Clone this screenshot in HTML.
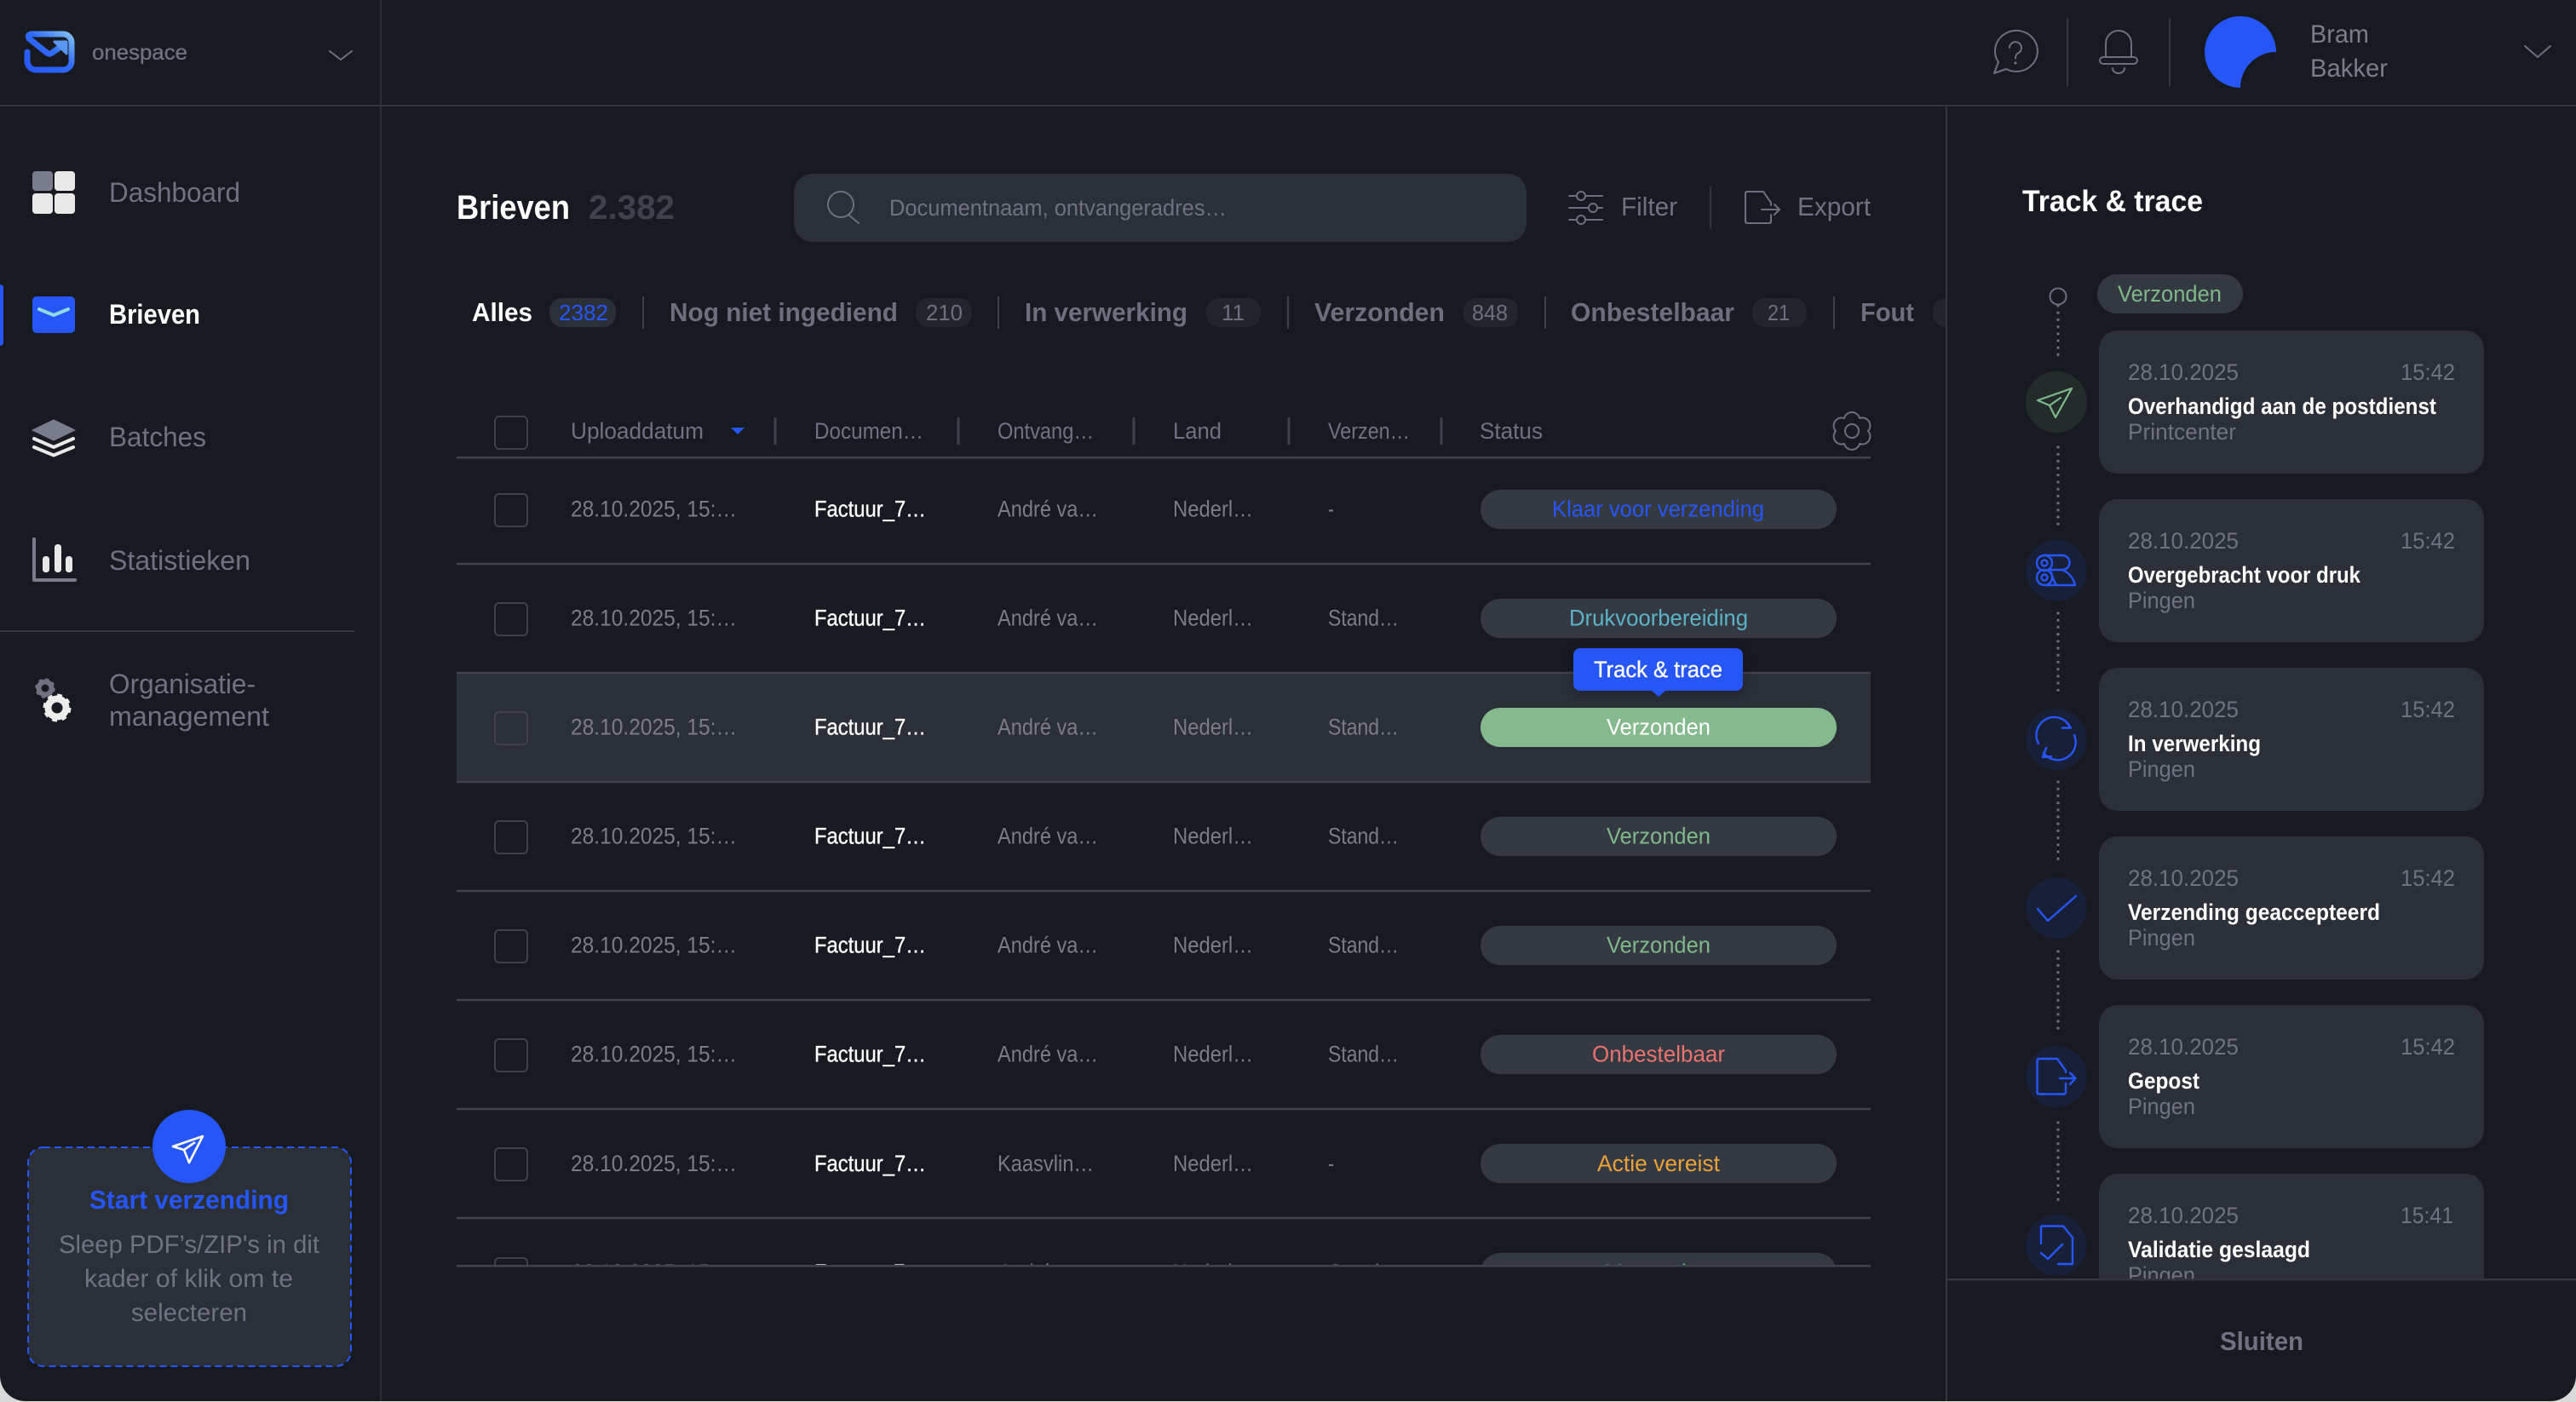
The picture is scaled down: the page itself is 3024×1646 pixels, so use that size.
<!DOCTYPE html>
<html lang="nl"><head><meta charset="utf-8"><title>Brieven</title>
<style>
html,body{margin:0;padding:0;background:#d9d9d9;width:3024px;height:1646px;overflow:hidden}
svg{display:block}
text{font-family:"Liberation Sans","Noto Sans CJK SC",sans-serif;font-size:27px;fill:#7a7d84}
.g{fill:#6f7281}.w{fill:#fff}.b{font-weight:700}
.nav{font-size:32px;fill:#6f7281}
.tab{font-size:31px;font-weight:700;fill:#6c6f7e}
.bd{font-size:26px;fill:#6c6f7e}
.m{fill:#fff;stroke:#fff;stroke-width:.35}
.dt{fill:#6f7281}
.ti{fill:#fff;font-weight:700}
.ln{stroke:#3f424d;stroke-width:2.5}
.sep{stroke:#3f424d;stroke-width:3}
.cb{fill:none;stroke:#3f424d;stroke-width:2}
.pill{fill:#353942}
.card{fill:#2b2f38}
.dots{stroke:#6c6f7e;stroke-width:3.2;stroke-linecap:round;stroke-dasharray:0 8.2;fill:none}
.ic{fill:none;stroke:#2656f8;stroke-width:2.4;stroke-linecap:round;stroke-linejoin:round}
.ig{fill:none;stroke:#6c6f7e;stroke-width:2;stroke-linecap:round;stroke-linejoin:round}
</style></head><body>
<svg xmlns="http://www.w3.org/2000/svg" width="3024" height="1646" viewBox="0 0 3024 1646">
<defs>
<linearGradient id="lg" x1="0" y1="1" x2="1" y2="0"><stop offset="0" stop-color="#2656f8"/><stop offset=".55" stop-color="#2f6af8"/><stop offset="1" stop-color="#7dbdf0"/></linearGradient>
<clipPath id="tb"><rect x="530" y="538" width="1680" height="948"/></clipPath>
<clipPath id="pn"><rect x="2286" y="125" width="738" height="1377"/></clipPath>
<clipPath id="av"><circle cx="2630" cy="61" r="42"/></clipPath>
<clipPath id="tabs"><rect x="530" y="340" width="1754" height="60"/></clipPath>
</defs>

<!-- base -->
<path d="M0 0H3024V1615a30 30 0 0 1-30 30H30a30 30 0 0 1-30-30Z" fill="#171a20"/>
<rect x="0" y="123" width="3024" height="2" fill="#33363e"/>
<rect x="446" y="0" width="2" height="1645" fill="#2c2f37"/>
<rect x="2284" y="125" width="2" height="1520" fill="#33363e"/>

<!-- logo -->
<path d="M32 61V72a10 10 0 0 0 10 10H74a10 10 0 0 0 10-10V50a10 10 0 0 0-10-10H37c-4 0-5 4-2 6L55 62c2 1.500 4 1.500 6 0L74 53" fill="none" stroke="url(#lg)" stroke-width="7" stroke-linecap="round" stroke-linejoin="round"/>
<path d="M64 49H78V63Z" fill="#5a97f4" stroke="#5a97f4" stroke-width="3" stroke-linejoin="round"/>
<text x="108" y="70" textLength="112" lengthAdjust="spacingAndGlyphs" style="font-size:25px;stroke:#6f7281;stroke-width:.35" class="g">onespace</text>
<path d="M387 60L400 70L413 60" class="ig"/>

<!-- nav icons -->
<rect x="38" y="201" width="24" height="23" rx="4" fill="#797c8c"/>
<rect x="64" y="201" width="24" height="23" rx="4" fill="#e8e8e8"/>
<rect x="38" y="227" width="24" height="24" rx="4" fill="#e8e8e8"/>
<rect x="64" y="227" width="24" height="24" rx="4" fill="#e8e8e8"/>
<text class="nav" x="128" y="237" textLength="154" lengthAdjust="spacingAndGlyphs">Dashboard</text>

<rect x="-4" y="334" width="8" height="72" rx="4" fill="#2656f8"/>
<rect x="38" y="348" width="50" height="43" rx="5" fill="#2656f8"/>
<path d="M46 363L63 370L80 363" fill="none" stroke="#8fdce0" stroke-width="4" stroke-linecap="round" stroke-linejoin="round"/>
<text class="nav b" x="128" y="380" style="fill:#fff" textLength="107" lengthAdjust="spacingAndGlyphs">Brieven</text>

<path d="M63 493L88 505L63 517L38 505Z" fill="#797c8c" stroke="#797c8c" stroke-width="1" stroke-linejoin="round"/>
<path d="M40 515L63 525L86 515M40 525L63 534.500L86 525" fill="none" stroke="#e8e8e8" stroke-width="4" stroke-linecap="round" stroke-linejoin="round"/>
<text class="nav" x="128" y="524" textLength="114" lengthAdjust="spacingAndGlyphs">Batches</text>

<path d="M40 633V681H88" fill="none" stroke="#797c8c" stroke-width="4" stroke-linecap="round" stroke-linejoin="round"/>
<rect x="50" y="653" width="8" height="19" rx="3.500" fill="#e8e8e8"/>
<rect x="64" y="639" width="8" height="33" rx="3.500" fill="#e8e8e8"/>
<rect x="77" y="653" width="8" height="19" rx="3.500" fill="#e8e8e8"/>
<text class="nav" x="128" y="669" textLength="166" lengthAdjust="spacingAndGlyphs">Statistieken</text>

<rect x="0" y="740" width="416" height="2" fill="#34373f"/>

<circle cx="53" cy="808" r="7.500" fill="none" stroke="#6e7180" stroke-width="6"/>
<circle cx="53" cy="808" r="10" fill="none" stroke="#6e7180" stroke-width="3.500" stroke-dasharray="3.900 3.950"/>
<circle cx="67" cy="831" r="10.500" fill="none" stroke="#ececec" stroke-width="8"/>
<circle cx="67" cy="831" r="14.500" fill="none" stroke="#ececec" stroke-width="4" stroke-dasharray="5.700 5.690"/>
<text class="nav" x="128" y="814" textLength="172" lengthAdjust="spacingAndGlyphs">Organisatie-</text>
<text class="nav" x="128" y="852" textLength="188" lengthAdjust="spacingAndGlyphs">management</text>

<!-- upload card -->
<rect x="33" y="1347" width="379" height="257" rx="18" fill="#2b2f38" stroke="#2656f8" stroke-width="2" stroke-dasharray="8 5"/>
<circle cx="222" cy="1346" r="43" fill="#2656f8"/>
<path d="M238 1334L203 1346L216 1350L222 1365ZM216 1350L229 1341" fill="none" stroke="#fff" stroke-width="2.600" stroke-linejoin="round"/>
<text class="b" x="105" y="1419" style="font-size:31px;fill:#2656f8" textLength="234" lengthAdjust="spacingAndGlyphs">Start verzending</text>
<text class="g" x="69" y="1471" style="font-size:30px" textLength="306" lengthAdjust="spacingAndGlyphs">Sleep PDF’s/ZIP's in dit</text>
<text class="g" x="99" y="1511" style="font-size:30px" textLength="245" lengthAdjust="spacingAndGlyphs">kader of klik om te</text>
<text class="g" x="154" y="1551" style="font-size:30px" textLength="136" lengthAdjust="spacingAndGlyphs">selecteren</text>

<!-- top right -->
<path d="M2355 81A25 24 0 1 0 2346 73L2341 86Z" class="ig"/>
<path d="M2359 56a7 7 0 1 1 10 6.500c-2 1-3 3-3 6" class="ig"/><circle cx="2366" cy="74" r="1.600" fill="#6c6f7e"/>
<rect x="2426" y="21" width="2" height="80" fill="#33363e"/>
<path d="M2472 67V51a15 15 0 0 1 30 0V67" class="ig"/>
<rect x="2465" y="67" width="44" height="8" rx="4" class="ig"/>
<path d="M2480 80a7 6 0 0 0 14 0" class="ig"/>
<rect x="2546" y="21" width="2" height="80" fill="#33363e"/>
<circle cx="2630" cy="61" r="42" fill="#2656f8"/>
<circle cx="2672" cy="103" r="42" fill="#171a20" clip-path="url(#av)"/>
<text x="2712" y="50" style="font-size:30px;fill:#7b7e89" textLength="69" lengthAdjust="spacingAndGlyphs">Bram</text>
<text x="2712" y="90" style="font-size:30px;fill:#7b7e89" textLength="91" lengthAdjust="spacingAndGlyphs">Bakker</text>
<path d="M2964 54L2979 67L2994 54" class="ig"/>

<!-- toolbar -->
<text class="b w" x="536" y="257" style="font-size:40px" textLength="133" lengthAdjust="spacingAndGlyphs">Brieven</text>
<text class="b" x="691" y="257" style="font-size:40px;fill:#3f424d" textLength="101" lengthAdjust="spacingAndGlyphs">2.382</text>
<rect x="932" y="204" width="860" height="80" rx="22" fill="#2b2f38"/>
<circle cx="987" cy="240" r="15" class="ig"/><path d="M996 252L1008 262" class="ig"/>
<text x="1044" y="253" style="fill:#6f7281" textLength="396" lengthAdjust="spacingAndGlyphs">Documentnaam, ontvangeradres…</text>
<path d="M1842 230H1851M1861 230H1881M1842 244H1865M1875 244H1881M1842 258H1851M1861 258H1881" class="ig"/>
<circle cx="1856" cy="230" r="5" class="ig"/><circle cx="1870" cy="244" r="5" class="ig"/><circle cx="1856" cy="258" r="5" class="ig"/>
<text x="1903" y="253" style="font-size:31px;fill:#6f7281" textLength="66" lengthAdjust="spacingAndGlyphs">Filter</text>
<rect x="2007" y="219" width="2" height="50" fill="#33363e"/>
<path d="M2079 252V260q0 2-2 2H2051q-2 0-2-2V227q0-2 2-2H2070L2079 238V241M2068 246H2088M2083 240L2089 246L2083 252" class="ig"/>
<text x="2110" y="253" style="font-size:31px;fill:#6f7281" textLength="86" lengthAdjust="spacingAndGlyphs">Export</text>

<!-- tabs -->
<g clip-path="url(#tabs)">
<text class="tab" style="fill:#fff" x="554" y="377" textLength="71" lengthAdjust="spacingAndGlyphs">Alles</text>
<rect x="645" y="350" width="78" height="34" rx="15" fill="#2b2f38"/>
<text class="bd" x="656" y="376" style="fill:#2656f8" textLength="58" lengthAdjust="spacingAndGlyphs">2382</text>
<rect x="754" y="348" width="2" height="38" fill="#3f424d"/>
<text class="tab" x="786" y="377" textLength="268" lengthAdjust="spacingAndGlyphs">Nog niet ingediend</text>
<rect x="1075" y="350" width="66" height="34" rx="15" fill="#22252c"/>
<text class="bd" x="1087" y="376" textLength="43" lengthAdjust="spacingAndGlyphs">210</text>
<rect x="1171" y="348" width="2" height="38" fill="#3f424d"/>
<text class="tab" x="1203" y="377" textLength="191" lengthAdjust="spacingAndGlyphs">In verwerking</text>
<rect x="1416" y="350" width="64" height="34" rx="15" fill="#22252c"/>
<text class="bd" x="1434" y="376" textLength="27" lengthAdjust="spacingAndGlyphs">11</text>
<rect x="1511" y="348" width="2" height="38" fill="#3f424d"/>
<text class="tab" x="1543" y="377" textLength="153" lengthAdjust="spacingAndGlyphs">Verzonden</text>
<rect x="1718" y="350" width="64" height="34" rx="15" fill="#22252c"/>
<text class="bd" x="1728" y="376" textLength="42" lengthAdjust="spacingAndGlyphs">848</text>
<rect x="1813" y="348" width="2" height="38" fill="#3f424d"/>
<text class="tab" x="1844" y="377" textLength="192" lengthAdjust="spacingAndGlyphs">Onbestelbaar</text>
<rect x="2057" y="350" width="64" height="34" rx="15" fill="#22252c"/>
<text class="bd" x="2075" y="376" textLength="26" lengthAdjust="spacingAndGlyphs">21</text>
<rect x="2152" y="348" width="2" height="38" fill="#3f424d"/>
<text class="tab" x="2184" y="377" textLength="63" lengthAdjust="spacingAndGlyphs">Fout</text>
<rect x="2269" y="350" width="64" height="34" rx="15" fill="#22252c"/>
</g>

<!-- table head -->
<rect x="581" y="489" width="38" height="38" rx="5" class="cb"/>
<text class="dt" x="670" y="515" textLength="156" lengthAdjust="spacingAndGlyphs">Uploaddatum</text>
<path d="M858 502H874L866 510Z" fill="#2656f8"/>
<path d="M910 490V522M1125 490V522M1331 490V522M1513 490V522M1692 490V522" class="sep"/>
<text class="dt" x="956" y="515" textLength="128" lengthAdjust="spacingAndGlyphs">Documen…</text>
<text class="dt" x="1171" y="515" textLength="113" lengthAdjust="spacingAndGlyphs">Ontvang…</text>
<text class="dt" x="1377" y="515" textLength="57" lengthAdjust="spacingAndGlyphs">Land</text>
<text class="dt" x="1559" y="515" textLength="96" lengthAdjust="spacingAndGlyphs">Verzen…</text>
<text class="dt" x="1737" y="515" textLength="74" lengthAdjust="spacingAndGlyphs">Status</text>
<path d="M2193 506A9.300 9.300 0 0 1 2183 521A9.300 9.300 0 0 1 2165 521A9.300 9.300 0 0 1 2155 506A9.300 9.300 0 0 1 2165 491A9.300 9.300 0 0 1 2183 491A9.300 9.300 0 0 1 2193 506Z" class="ig"/>
<circle cx="2174" cy="506" r="8" class="ig"/>

<!-- table -->
<rect x="536" y="790" width="1660" height="128" fill="#2b2f38"/>
<g clip-path="url(#tb)">
<path d="M536 662H2196M536 790H2196M536 918H2196M536 1046H2196M536 1174H2196M536 1302H2196M536 1430H2196" class="ln"/>
<!-- row 1 -->
<rect x="581" y="580" width="38" height="38" rx="5" class="cb"/>
<text x="670" y="606.500" textLength="195" lengthAdjust="spacingAndGlyphs">28.10.2025, 15:…</text>
<text class="m" x="956" y="606.500" textLength="131" lengthAdjust="spacingAndGlyphs">Factuur_7…</text>
<text x="1171" y="606.500" textLength="118" lengthAdjust="spacingAndGlyphs">André va…</text>
<text x="1377" y="606.500" textLength="94" lengthAdjust="spacingAndGlyphs">Nederl…</text>
<text x="1559" y="606.500" textLength="7" lengthAdjust="spacingAndGlyphs">-</text>
<rect class="pill" x="1738" y="575" width="418" height="46" rx="23"/>
<text x="1822" y="606.500" style="fill:#2656f8" textLength="249" lengthAdjust="spacingAndGlyphs">Klaar voor verzending</text>
<!-- row 2 -->
<rect x="581" y="708" width="38" height="38" rx="5" class="cb"/>
<text x="670" y="734.500" textLength="195" lengthAdjust="spacingAndGlyphs">28.10.2025, 15:…</text>
<text class="m" x="956" y="734.500" textLength="131" lengthAdjust="spacingAndGlyphs">Factuur_7…</text>
<text x="1171" y="734.500" textLength="118" lengthAdjust="spacingAndGlyphs">André va…</text>
<text x="1377" y="734.500" textLength="94" lengthAdjust="spacingAndGlyphs">Nederl…</text>
<text x="1559" y="734.500" textLength="83" lengthAdjust="spacingAndGlyphs">Stand…</text>
<rect class="pill" x="1738" y="703" width="418" height="46" rx="23"/>
<text x="1842" y="734.500" style="fill:#5bb3c6" textLength="210" lengthAdjust="spacingAndGlyphs">Drukvoorbereiding</text>
<!-- row 3 -->
<rect x="581" y="836" width="38" height="38" rx="5" class="cb"/>
<text x="670" y="862.500" textLength="195" lengthAdjust="spacingAndGlyphs">28.10.2025, 15:…</text>
<text class="m" x="956" y="862.500" textLength="131" lengthAdjust="spacingAndGlyphs">Factuur_7…</text>
<text x="1171" y="862.500" textLength="118" lengthAdjust="spacingAndGlyphs">André va…</text>
<text x="1377" y="862.500" textLength="94" lengthAdjust="spacingAndGlyphs">Nederl…</text>
<text x="1559" y="862.500" textLength="83" lengthAdjust="spacingAndGlyphs">Stand…</text>
<rect x="1738" y="831" width="418" height="46" rx="23" fill="#85b98e"/>
<text class="w" x="1886" y="862.500" textLength="122" lengthAdjust="spacingAndGlyphs">Verzonden</text>
<!-- row 4 -->
<rect x="581" y="964" width="38" height="38" rx="5" class="cb"/>
<text x="670" y="990.500" textLength="195" lengthAdjust="spacingAndGlyphs">28.10.2025, 15:…</text>
<text class="m" x="956" y="990.500" textLength="131" lengthAdjust="spacingAndGlyphs">Factuur_7…</text>
<text x="1171" y="990.500" textLength="118" lengthAdjust="spacingAndGlyphs">André va…</text>
<text x="1377" y="990.500" textLength="94" lengthAdjust="spacingAndGlyphs">Nederl…</text>
<text x="1559" y="990.500" textLength="83" lengthAdjust="spacingAndGlyphs">Stand…</text>
<rect class="pill" x="1738" y="959" width="418" height="46" rx="23"/>
<text x="1886" y="990.500" style="fill:#7fb88b" textLength="122" lengthAdjust="spacingAndGlyphs">Verzonden</text>
<!-- row 5 -->
<rect x="581" y="1092" width="38" height="38" rx="5" class="cb"/>
<text x="670" y="1118.500" textLength="195" lengthAdjust="spacingAndGlyphs">28.10.2025, 15:…</text>
<text class="m" x="956" y="1118.500" textLength="131" lengthAdjust="spacingAndGlyphs">Factuur_7…</text>
<text x="1171" y="1118.500" textLength="118" lengthAdjust="spacingAndGlyphs">André va…</text>
<text x="1377" y="1118.500" textLength="94" lengthAdjust="spacingAndGlyphs">Nederl…</text>
<text x="1559" y="1118.500" textLength="83" lengthAdjust="spacingAndGlyphs">Stand…</text>
<rect class="pill" x="1738" y="1087" width="418" height="46" rx="23"/>
<text x="1886" y="1118.500" style="fill:#7fb88b" textLength="122" lengthAdjust="spacingAndGlyphs">Verzonden</text>
<!-- row 6 -->
<rect x="581" y="1220" width="38" height="38" rx="5" class="cb"/>
<text x="670" y="1246.500" textLength="195" lengthAdjust="spacingAndGlyphs">28.10.2025, 15:…</text>
<text class="m" x="956" y="1246.500" textLength="131" lengthAdjust="spacingAndGlyphs">Factuur_7…</text>
<text x="1171" y="1246.500" textLength="118" lengthAdjust="spacingAndGlyphs">André va…</text>
<text x="1377" y="1246.500" textLength="94" lengthAdjust="spacingAndGlyphs">Nederl…</text>
<text x="1559" y="1246.500" textLength="83" lengthAdjust="spacingAndGlyphs">Stand…</text>
<rect class="pill" x="1738" y="1215" width="418" height="46" rx="23"/>
<text x="1869" y="1246.500" style="fill:#e8736f" textLength="156" lengthAdjust="spacingAndGlyphs">Onbestelbaar</text>
<!-- row 7 -->
<rect x="581" y="1348" width="38" height="38" rx="5" class="cb"/>
<text x="670" y="1375" textLength="195" lengthAdjust="spacingAndGlyphs">28.10.2025, 15:…</text>
<text class="m" x="956" y="1375" textLength="131" lengthAdjust="spacingAndGlyphs">Factuur_7…</text>
<text x="1171" y="1375" textLength="113" lengthAdjust="spacingAndGlyphs">Kaasvlin…</text>
<text x="1377" y="1375" textLength="94" lengthAdjust="spacingAndGlyphs">Nederl…</text>
<text x="1559" y="1375" textLength="7" lengthAdjust="spacingAndGlyphs">-</text>
<rect class="pill" x="1738" y="1343" width="418" height="46" rx="23"/>
<text x="1875" y="1375" style="fill:#e9a23b" textLength="144" lengthAdjust="spacingAndGlyphs">Actie vereist</text>
<!-- row 8 -->
<rect x="581" y="1477" width="38" height="38" rx="5" class="cb"/>
<text x="671" y="1503" textLength="193" lengthAdjust="spacingAndGlyphs">28.10.2025, 15:…</text>
<text class="m" x="956" y="1503" textLength="130" lengthAdjust="spacingAndGlyphs">Factuur_7…</text>
<text x="1172" y="1503" textLength="117" lengthAdjust="spacingAndGlyphs">André va…</text>
<text x="1377" y="1503" textLength="93" lengthAdjust="spacingAndGlyphs">Nederl…</text>
<text x="1560" y="1503" textLength="82" lengthAdjust="spacingAndGlyphs">Stand…</text>
<rect class="pill" x="1738" y="1471" width="418" height="46" rx="23"/>
<text x="1886" y="1503" style="fill:#7fb88b" textLength="122" lengthAdjust="spacingAndGlyphs">Verzonden</text>
</g>
<rect x="536" y="536" width="1660" height="2.500" fill="#3f424d"/>
<rect x="536" y="1485" width="1660" height="2.500" fill="#3f424d"/>

<!-- tooltip -->
<rect x="1847" y="765" width="199" height="50" rx="8" fill="#000" opacity=".25" style="filter:blur(7px)"/>
<rect x="1847" y="761" width="199" height="50" rx="8" fill="#2656f8"/>
<path d="M1939 811H1955L1947 818Z" fill="#2656f8"/>
<text class="m" x="1871" y="795" textLength="151" lengthAdjust="spacingAndGlyphs">Track &amp; trace</text>

<!-- panel -->
<text class="b w" x="2374" y="248" style="font-size:35px" textLength="212" lengthAdjust="spacingAndGlyphs">Track &amp; trace</text>
<g clip-path="url(#pn)">
<circle cx="2416" cy="348" r="9.500" fill="none" stroke="#6c6f7e" stroke-width="2"/>
<path class="dots" d="M2416 359V422M2416 525V616M2416 720V816M2416 918V1015M2416 1117V1214M2416 1318V1409"/>
<rect x="2462" y="322" width="171" height="46" rx="23" fill="#343841"/>
<text x="2486" y="354" style="fill:#7fb88b" textLength="122" lengthAdjust="spacingAndGlyphs">Verzonden</text>

<rect class="card" x="2464" y="388" width="452" height="168" rx="22"/>
<text class="dt" x="2498" y="446" textLength="130" lengthAdjust="spacingAndGlyphs">28.10.2025</text>
<text class="dt" x="2818" y="446" textLength="64" lengthAdjust="spacingAndGlyphs">15:42</text>
<text class="ti" x="2498" y="486" textLength="362" lengthAdjust="spacingAndGlyphs">Overhandigd aan de postdienst</text>
<text class="dt" x="2498" y="516" textLength="127" lengthAdjust="spacingAndGlyphs">Printcenter</text>

<rect class="card" x="2464" y="586" width="452" height="168" rx="22"/>
<text class="dt" x="2498" y="644" textLength="130" lengthAdjust="spacingAndGlyphs">28.10.2025</text>
<text class="dt" x="2818" y="644" textLength="64" lengthAdjust="spacingAndGlyphs">15:42</text>
<text class="ti" x="2498" y="684" textLength="273" lengthAdjust="spacingAndGlyphs">Overgebracht voor druk</text>
<text class="dt" x="2498" y="714" textLength="79" lengthAdjust="spacingAndGlyphs">Pingen</text>

<rect class="card" x="2464" y="784" width="452" height="168" rx="22"/>
<text class="dt" x="2498" y="842" textLength="130" lengthAdjust="spacingAndGlyphs">28.10.2025</text>
<text class="dt" x="2818" y="842" textLength="64" lengthAdjust="spacingAndGlyphs">15:42</text>
<text class="ti" x="2498" y="882" textLength="156" lengthAdjust="spacingAndGlyphs">In verwerking</text>
<text class="dt" x="2498" y="912" textLength="79" lengthAdjust="spacingAndGlyphs">Pingen</text>

<rect class="card" x="2464" y="982" width="452" height="168" rx="22"/>
<text class="dt" x="2498" y="1040" textLength="130" lengthAdjust="spacingAndGlyphs">28.10.2025</text>
<text class="dt" x="2818" y="1040" textLength="64" lengthAdjust="spacingAndGlyphs">15:42</text>
<text class="ti" x="2498" y="1080" textLength="296" lengthAdjust="spacingAndGlyphs">Verzending geaccepteerd</text>
<text class="dt" x="2498" y="1110" textLength="79" lengthAdjust="spacingAndGlyphs">Pingen</text>

<rect class="card" x="2464" y="1180" width="452" height="168" rx="22"/>
<text class="dt" x="2498" y="1238" textLength="130" lengthAdjust="spacingAndGlyphs">28.10.2025</text>
<text class="dt" x="2818" y="1238" textLength="64" lengthAdjust="spacingAndGlyphs">15:42</text>
<text class="ti" x="2498" y="1278" textLength="84" lengthAdjust="spacingAndGlyphs">Gepost</text>
<text class="dt" x="2498" y="1308" textLength="79" lengthAdjust="spacingAndGlyphs">Pingen</text>

<rect class="card" x="2464" y="1378" width="452" height="168" rx="22"/>
<text class="dt" x="2498" y="1436" textLength="130" lengthAdjust="spacingAndGlyphs">28.10.2025</text>
<text class="dt" x="2818" y="1436" textLength="62" lengthAdjust="spacingAndGlyphs">15:41</text>
<text class="ti" x="2498" y="1476" textLength="214" lengthAdjust="spacingAndGlyphs">Validatie geslaagd</text>
<text class="dt" x="2498" y="1506" textLength="79" lengthAdjust="spacingAndGlyphs">Pingen</text>

<!-- timeline icons -->
<circle cx="2414" cy="472" r="36" fill="#232c2b"/>
<path d="M2432 456L2392 470L2406 476L2413 490ZM2406 476L2419 467" fill="none" stroke="#7fb88b" stroke-width="2.200" stroke-linejoin="round" stroke-linecap="round"/>

<circle cx="2414" cy="670" r="36" fill="#172038"/>
<circle cx="2400" cy="661" r="9" class="ic"/><circle cx="2400" cy="661" r="3.500" class="ic"/>
<circle cx="2400" cy="678" r="9" class="ic"/><circle cx="2400" cy="678" r="3.500" class="ic"/>
<path d="M2400 652H2421a8.500 8.500 0 0 1 0 17H2406M2421 669C2428 672 2434 678 2436 687H2414C2411 682 2409 677 2408 672M2400 687H2412" class="ic"/>

<circle cx="2414" cy="868" r="36" fill="#172038"/>
<path d="M2393 873A21 21 0 0 1 2430 853M2425 847L2431 854.500L2421 854.500M2435 863A21 21 0 0 1 2399 884M2402 878L2398 889L2408 888" class="ic"/>

<circle cx="2414" cy="1066" r="36" fill="#172038"/>
<path d="M2392 1067L2404 1081L2437 1052" class="ic"/>

<circle cx="2414" cy="1264" r="36" fill="#172038"/>
<path d="M2425 1272V1282q0 2.500-2.500 2.500H2394q-2.500 0-2.500-2.500V1245.500q0-2.500 2.500-2.500H2415L2425 1257V1259M2418 1266H2436M2430 1259.500L2436.500 1266L2430 1273" class="ic"/>

<circle cx="2414" cy="1462" r="36" fill="#172038"/>
<path d="M2396 1460V1441q0-1.500 1.500-1.500H2422L2433 1453V1484H2416M2396 1471L2404 1478L2421 1461" class="ic"/>
</g>
<rect x="2286" y="1501" width="738" height="2.500" fill="#33363e"/>
<text class="b" x="2606" y="1585" style="font-size:31px;fill:#6f7281" textLength="98" lengthAdjust="spacingAndGlyphs">Sluiten</text>
</svg>
</body></html>
